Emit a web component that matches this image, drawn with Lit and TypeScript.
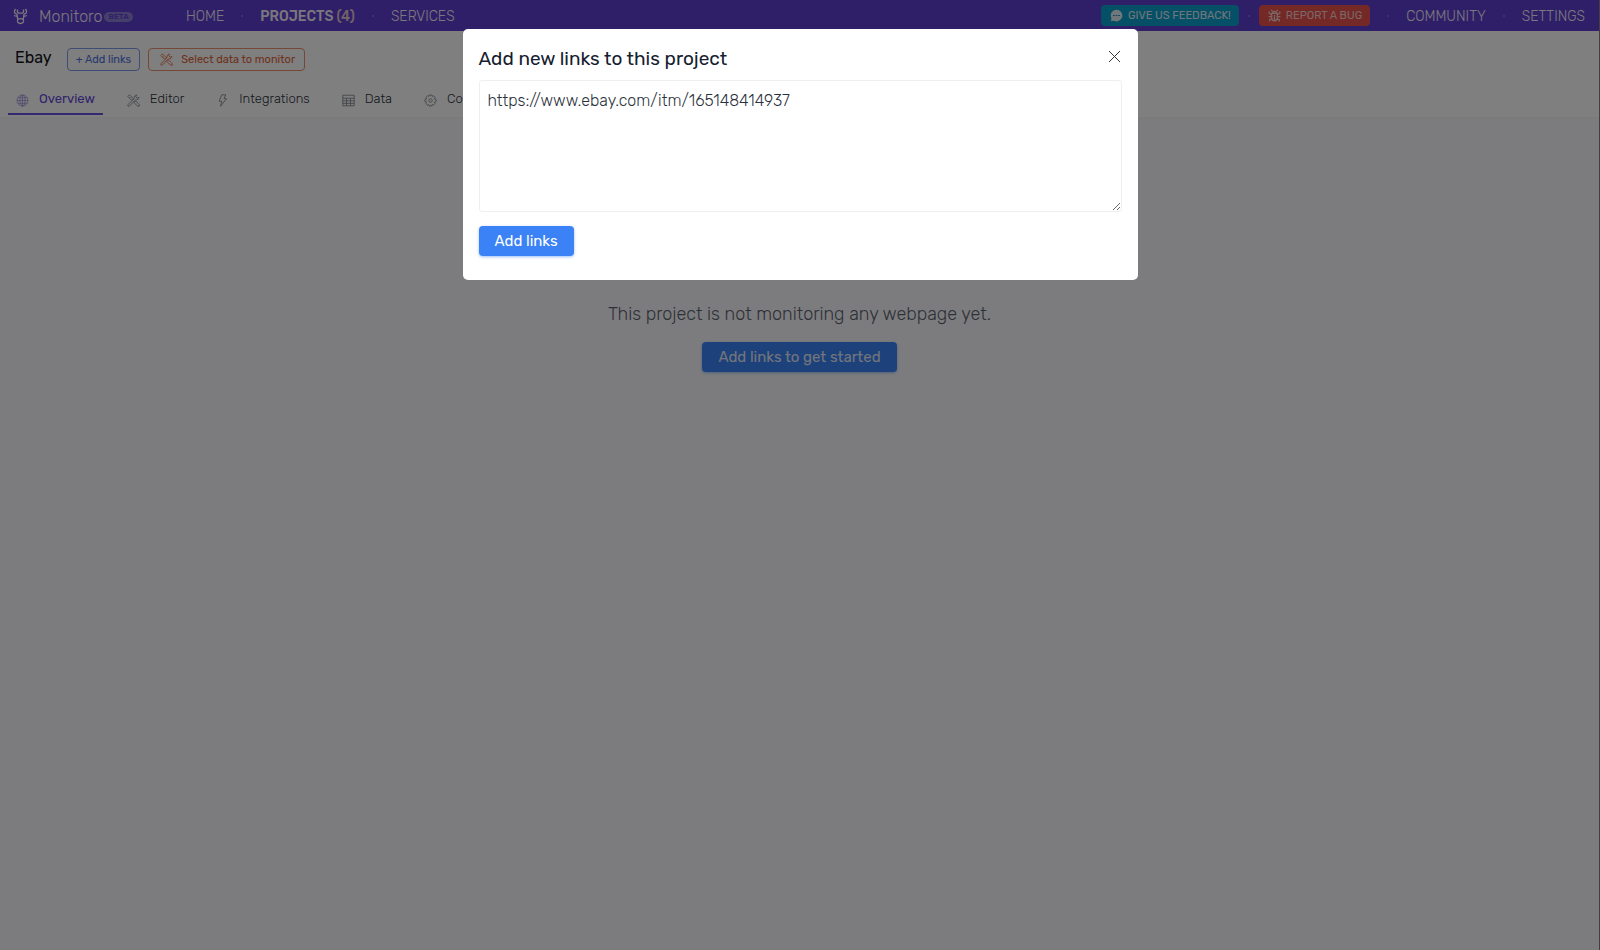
import { LitElement, html, css, svg } from "lit";
import { customElement, state } from "lit/decorators.js";

const icons: Record<string, unknown> = {
  globe: svg`<circle cx="8" cy="8" r="6.8"/><ellipse cx="8" cy="8" rx="3.2" ry="6.8"/><path d="M8 1.2v13.6M1.2 8h13.6M2.2 4.6h11.6M2.2 11.4h11.6"/>`,
  tools: svg`<path d="M1 3l2-2 4.500 4.500-2 2zM3 5l1-1M8.500 10.500l2-2L15 13v2h-2zM1 13.200l7.800-7.600c-.5-2.200.8-4.200 3.200-4.300l-1.300 2 1.900 1.900 2-1.200c0 2.400-2 3.700-4.200 3.200L2.800 15c-1.100.6-2.400-.7-1.800-1.800z"/>`,
  bolt: svg`<path d="M7 1h5L9.800 5.800H13L5.600 15l1.600-6H4z"/>`,
  table: svg`<path d="M1 1.500h14v13H1zM1 5.200h14M1 8.400h14M1 11.500h14M5.600 5.200v9.300M10.400 5.200v9.300"/>`,
  gear: svg`<circle cx="8" cy="8" r="2.1"/><path d="M6.600 1.200h2.800l.5 1.700 1.600-.8 2.200 2.200-.9 1.600 2 .7v2.800l-2 .7.9 1.600-2.200 2.200-1.600-.8-.5 1.700H6.600l-.5-1.700-1.600.8-2.200-2.200.9-1.600-2-.7V6.600l2-.7-.9-1.600 2.200-2.200 1.600.8z"/>`,
};

const icon = (name: string) =>
  html`<svg class="icon" viewBox="0 0 16 16" aria-hidden="true">${icons[name]}</svg>`;

const tabs = [
  { label: "Overview", icon: "globe" },
  { label: "Editor", icon: "tools" },
  { label: "Integrations", icon: "bolt" },
  { label: "Data", icon: "table" },
  { label: "Configuration", icon: "gear" },
];

@customElement("app-root")
export class AppRoot extends LitElement {
  @state() private open = true;
  @state() private links = "https://www.ebay.com/itm/165148414937";

  static styles = css`
    :host {
      display: block;
      min-height: 100vh;
      box-sizing: border-box;
      background: #f9f9fc;
      border-right: 1px solid #808084;
      font-family: Rubik, Roboto, "Liberation Sans", sans-serif;
      font-size: 14px;
      font-weight: 300;
      color: #1f2937;
    }
    * { box-sizing: border-box; }
    a { color: inherit; text-decoration: none; }
    button { font: inherit; cursor: pointer; margin: 0; }
    .icon { width: 13px; height: 13px; fill: none; stroke: currentColor; stroke-width: 1; flex: none; }

    .topbar {
      display: flex;
      align-items: center;
      height: 31px;
      padding: 0 14px 0 13px;
      background: #5f3dd0;
      color: #f4f0fc;
      font-size: 14px;
    }
    .brand { display: flex; align-items: center; width: 173px; padding-top: 2px; font-size: 16px; }
    .bull { width: 15px; height: 17px; fill: none; stroke: currentColor; stroke-width: 1.3; margin-right: 11px; }
    .beta {
      margin-left: 2px;
      padding: 0 4px;
      border-radius: 5px;
      background: #8d7fd2;
      color: #5f3dd0;
      font-size: 8px;
      line-height: 10px;
      font-weight: 500;
    }
    .nav, .side { display: flex; align-items: center; }
    .nav a, .side a { padding-top: 2px; }
    .side { margin-left: auto; }
    .dot { width: 2px; height: 2px; border-radius: 1px; background: #8472d6; margin: 0 17px; }
    .dot.near { margin: 0 9px; }
    .current { font-weight: 500; }
    .count { color: #e6c9d0; }
    .pill {
      display: flex;
      align-items: center;
      gap: 5px;
      height: 21px;
      padding: 0 8px 0 9px;
      border: 0;
      border-radius: 4px;
      font-size: 11px;
      font-weight: 400;
      color: #e0eef4;
    }
    .feedback { background: #0aa0cc; }
    .bug { background: #e8524f; color: #f6cfca; }
    .pill .icon { stroke-width: 1.5; }

    .project { background: #ffffff; border-bottom: 1px solid #f6f6f9; }
    .heading { display: flex; align-items: center; gap: 8px; padding: 17px 15px 0; }
    .name { margin: 0 7px 4px 0; font-size: 16px; line-height: 19px; font-weight: 400; color: #111318; }
    .outline {
      display: flex;
      align-items: center;
      gap: 8px;
      height: 23px;
      padding: 0 8px;
      border: 1px solid #7f98ec;
      border-radius: 4px;
      background: transparent;
      color: #4d6ee0;
      font-size: 11px;
      font-weight: 400;
    }
    .orange { border-color: #ea8f6c; color: #dc6238; padding: 0 9px 0 11px; }
    .tabs { display: flex; gap: 16px; padding: 13px 8px 2px; }
    .tab {
      display: flex;
      align-items: center;
      gap: 10px;
      height: 31px;
      padding: 0 8px;
      border-bottom: 2px solid transparent;
      font-size: 13px;
      color: #2c323c;
    }
    .tab .icon { color: #7b808a; margin-top: 3px; }
    .tab.active { border-color: #6d50e0; color: #6248d6; font-weight: 400; }
    .tab.active .icon { color: #a296dc; }

    .empty { display: flex; flex-direction: column; align-items: center; padding: 184px 16px 0; }
    .message { margin: 0; font-size: 18px; line-height: 24px; color: #5c6370; }
    .primary {
      height: 30px;
      padding: 0 16px;
      border: 0;
      border-radius: 4px;
      background: #3b82f6;
      color: #ffffff;
      font-size: 15px;
      font-weight: 450;
      box-shadow: 0 1px 3px rgba(59, 130, 246, 0.5);
    }
    .empty .primary { margin-top: 16px; color: #e4eaf6; }

    .overlay {
      position: fixed;
      inset: 0;
      display: flex;
      justify-content: center;
      align-items: flex-start;
      padding: 29px 16px;
      background: rgba(0, 0, 0, 0.5);
    }
    .dialog {
      width: 100%;
      max-width: 675px;
      padding: 16px 16px 24px;
      border-radius: 5px;
      background: #ffffff;
    }
    .title { display: flex; justify-content: space-between; align-items: flex-start; }
    .title h2 { margin: 2px 0 9px; font-size: 19px; line-height: 24px; font-weight: 450; color: #16202f; }
    .close { display: flex; padding: 5px 1px; border: 0; background: none; color: #33373d; }
    .text {
      display: block;
      width: 100%;
      height: 132px;
      padding: 9px 8px;
      border: 1px solid #efeff3;
      border-radius: 3px;
      background: #ffffff;
      font: inherit;
      font-size: 16px;
      line-height: 22px;
      color: #2b313b;
      outline: none;
      resize: vertical;
    }
    .dialog .primary { margin-top: 14px; display: block; }
  `;

  private show = () => (this.open = true);
  private hide = () => (this.open = false);

  render() {
    return html`
      <header class="topbar">
        <a class="brand" href="#">
          <svg class="bull" viewBox="0 0 15 17" aria-hidden="true">
            <path d="M2.500 1C.6 3.400 1.200 5.400 4 6.200M12.500 1c1.900 2.400 1.300 4.400-1.500 5.200M4.600 1.500c-.6 1.900-.2 3 .9 3.700h4c1.100-.7 1.500-1.800.9-3.700M1 7.500l3 1M14 7.500l-3 1M4 6.200l.7 5.300M11 6.200l-.7 5.300M4.700 11.500c-.8 2.500.3 4 2.800 4s3.600-1.500 2.800-4c-1.600-.9-4-.9-5.600 0z" />
          </svg>
          Monitoro<span class="beta">BETA</span>
        </a>
        <nav class="nav">
          <a href="#">HOME</a><span class="dot"></span>
          <a class="current" href="#">PROJECTS <span class="count">(4)</span></a><span class="dot"></span>
          <a href="#">SERVICES</a>
        </nav>
        <div class="side">
          <button class="pill feedback">
            <svg class="icon" viewBox="0 0 16 16" aria-hidden="true">
              <path fill="currentColor" stroke="none" d="M8 .8a7.200 7.200 0 1 1-3.300 13.600L1 15.200l.9-3.600A7.200 7.200 0 0 1 8 .8z" />
              <path d="M3.800 8h2M7 8h2M10.200 8h2" stroke="#0a86ac" />
            </svg>
            GIVE US FEEDBACK!
          </button>
          <span class="dot near"></span>
          <button class="pill bug">
            <svg class="icon" viewBox="0 0 16 16" aria-hidden="true">
              <path d="M4.500 5.500h7v5.200a3.500 3.800 0 0 1-7 0zM5.500 5.500a2.500 2.700 0 0 1 5 0M8 7.500v6.500M4.500 7L1.500 5.500V3M11.500 7l3-1.500V3M4.500 9.500H.8M11.500 9.500h3.700M4.800 12l-2.800 1v2.500M11.200 12l2.800 1v2.500M5.500 3L4 1M10.500 3L12 1" />
            </svg>
            REPORT A BUG
          </button>
          <span class="dot"></span>
          <a href="#">COMMUNITY</a><span class="dot"></span>
          <a href="#">SETTINGS</a>
        </div>
      </header>

      <section class="project">
        <div class="heading">
          <h1 class="name">Ebay</h1>
          <button class="outline" @click=${this.show}>+ Add links</button>
          <button class="outline orange">${icon("tools")}Select data to monitor</button>
        </div>
        <nav class="tabs">
          ${tabs.map(
            (t, i) => html`<a class="tab ${i === 0 ? "active" : ""}" href="#">${icon(t.icon)}${t.label}</a>`
          )}
        </nav>
      </section>

      <main class="empty">
        <p class="message">This project is not monitoring any webpage yet.</p>
        <button class="primary" @click=${this.show}>Add links to get started</button>
      </main>

      ${this.open
        ? html`<div class="overlay">
            <div class="dialog" role="dialog" aria-modal="true" aria-labelledby="title">
              <div class="title">
                <h2 id="title">Add new links to this project</h2>
                <button class="close" aria-label="Close" @click=${this.hide}>
                  <svg class="icon" viewBox="0 0 13 13" aria-hidden="true"><path d="M1 1l11 11M12 1L1 12" /></svg>
                </button>
              </div>
              <textarea
                class="text"
                aria-labelledby="title"
                spellcheck="false"
                .value=${this.links}
                @input=${(e: Event) => (this.links = (e.target as HTMLTextAreaElement).value)}
              ></textarea>
              <button class="primary" @click=${this.hide}>Add links</button>
            </div>
          </div>`
        : null}
    `;
  }
}
